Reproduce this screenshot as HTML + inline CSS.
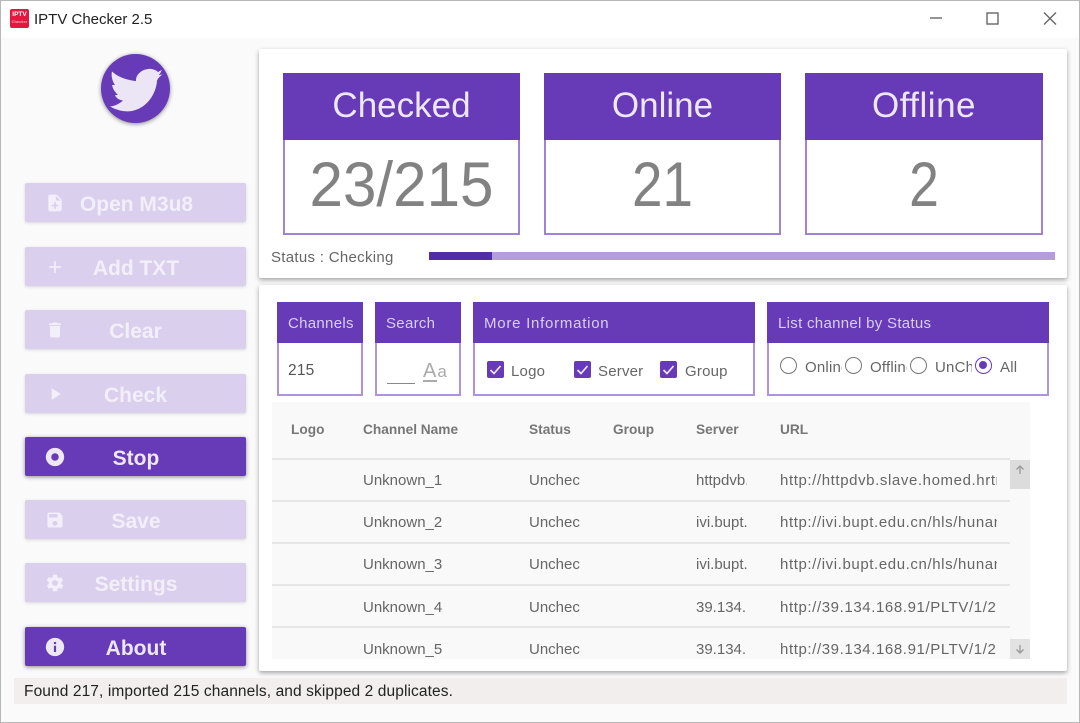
<!DOCTYPE html>
<html><head><meta charset="utf-8">
<style>
html,body{margin:0;padding:0;width:1080px;height:723px;overflow:hidden;background:#fafafa;font-family:"Liberation Sans",sans-serif}
div,span{position:absolute;box-sizing:border-box;white-space:nowrap}
svg{position:absolute;overflow:visible}
.frame{left:0;top:0;width:1080px;height:723px;border:1px solid #b8b8b8;pointer-events:none}
.btn{left:25px;width:221px;height:39px;background:#dacfec;border-radius:2px;box-shadow:0 1px 3px rgba(0,0,0,.14);color:#f3effa;font-weight:bold;font-size:21px;line-height:43px;text-align:center}
.btn.on{background:#673ab7;color:#ede7f6;box-shadow:0 1px 4px rgba(0,0,0,.45)}
.btn svg{left:19.5px;top:10px}
.card{background:#fff;border-radius:2px;box-shadow:0 2px 5px rgba(0,0,0,.35)}
.stat{top:73px;width:237px;height:162px;border:2px solid #a083d8;background:#fff}
.stat .h{left:-2px;top:-2px;width:237px;height:67px;background:#673ab7;color:#ede7f6;font-size:35px;line-height:66px;text-align:center}
.stat .v{left:0;width:233px;top:65px;height:94px;color:#828282;font-size:63px;line-height:90px;text-align:center}
.box{top:302px;height:94px;border:2px solid #ae93e0;border-top:0;background:#fff}
.box .h{left:-2px;top:0;height:41px;background:#673ab7;color:#d9cff0;font-size:15px;letter-spacing:.3px;line-height:43px;padding-left:11px}
.t{font-size:15px;color:#666;letter-spacing:.2px}
.th{top:422px;font-size:13.7px;color:#777;font-weight:bold;line-height:16px}
.cell{font-size:15px;color:#666;line-height:17px;overflow:hidden}
.url{letter-spacing:.6px}
.line{left:272px;width:738px;height:2px;background:#e6e6e6}
.cb{top:361px;width:17px;height:17px;background:#673ab7;border-radius:2px}
.rd{top:357px;width:17px;height:17px;border:1.6px solid #777;border-radius:50%;background:#fff}
</style></head><body>

<div style="left:0;top:0;width:1080px;height:38px;background:#fff"></div>
<div style="left:10px;top:9px;width:19px;height:19px;background:#e5173f;border-radius:2px;color:#fff;font-size:6.5px;font-weight:bold;line-height:9px;text-align:center;overflow:hidden;padding-top:1px">IPTV<br><span style="position:static;font-size:4px;line-height:6px;display:block;color:#f6a9b8">Checker</span></div>
<div style="left:34px;top:11px;font-size:15px;color:#222;line-height:18px">IPTV Checker 2.5</div>
<svg style="left:0;top:0" width="1080" height="38"><g fill="none" stroke="#666" stroke-width="1.4"><path d="M930 18H942"/><rect x="987" y="13" width="11" height="11"/><path d="M1044 12.500L1056 24.500M1056 12.500L1044 24.500"/></g></svg>

<div style="left:101px;top:54px;width:69px;height:69px;border-radius:50%;background:#673ab7;box-shadow:0 1px 4px rgba(0,0,0,.45)"></div>
<svg style="left:0;top:0" width="200" height="130"><path fill="#ebe5f6" d="M161.700 70L158 72C155 69 150 68.500 148 69C143 69.500 137 73 136 79L136 81C126 80 118 77 112 71.500C111 75 112 81 115 85L112 85C113 90 116 93 118 95L115 95C116 98 119 100 123 100.500C119 104 115 106 110 106.500C118 111 126 112 132 111C147 108 156 94 157 81C157.500 79 159 77 162.500 74.500L158.500 75C160 74 161 72 161.700 70Z"/></svg>

<div class="btn" style="top:183px;padding-left:2px">Open M3u8<svg width="20" height="20" viewBox="0 0 24 24"><path fill="#f3effa" d="M14 2H6a2 2 0 0 0-2 2v16a2 2 0 0 0 2 2h12a2 2 0 0 0 2-2V8zm2 14h-3v3h-2v-3H8v-2h3v-3h2v3h3zM13 9V3.500L18.500 9z"/></svg></div>
<div class="btn" style="top:247px;padding-left:1px">Add TXT<svg width="20" height="20" viewBox="0 0 24 24"><path fill="#f3effa" d="M19 13h-6v6h-2v-6H5v-2h6V5h2v6h6z"/></svg></div>
<div class="btn" style="top:310px">Clear<svg width="20" height="20" viewBox="0 0 24 24"><path fill="#f3effa" d="M6 19a2 2 0 0 0 2 2h8a2 2 0 0 0 2-2V7H6zM19 4h-3.500l-1-1h-5l-1 1H5v2h14z"/></svg></div>
<div class="btn" style="top:374px">Check<svg width="20" height="20" viewBox="0 0 24 24"><path fill="#f3effa" d="M8 5v14l11-7z"/></svg></div>
<div class="btn on" style="top:437px;padding-left:1px">Stop<svg width="20" height="20" viewBox="0 0 24 24"><path fill="#ede7f6" fill-rule="evenodd" d="M12 1a11 11 0 1 0 0 22 11 11 0 0 0 0-22zM12 7.500a4.500 4.500 0 1 1 0 9 4.500 4.500 0 0 1 0-9z"/></svg></div>
<div class="btn" style="top:500px;padding-left:1px">Save<svg width="20" height="20" viewBox="0 0 24 24"><path fill="#f3effa" d="M17 3H5a2 2 0 0 0-2 2v14a2 2 0 0 0 2 2h14a2 2 0 0 0 2-2V7zm-5 16a3 3 0 1 1 0-6 3 3 0 0 1 0 6zm3-10H5V5h10z"/></svg></div>
<div class="btn" style="top:563px;padding-left:1px">Settings<svg width="20" height="20" viewBox="0 0 24 24"><path fill="#f3effa" d="M19.400 13c0-.3.100-.6.100-1s0-.7-.1-1l2.100-1.600c.2-.2.200-.4.100-.6l-2-3.500c-.1-.2-.4-.3-.6-.2l-2.500 1c-.5-.4-1.100-.7-1.700-1l-.4-2.600c0-.3-.2-.4-.5-.4h-4c-.3 0-.5.100-.5.400l-.4 2.600c-.6.300-1.200.6-1.700 1l-2.500-1c-.2-.1-.5 0-.6.200l-2 3.500c-.1.200-.1.400.1.600L4.600 11c0 .3-.1.700-.1 1s0 .7.100 1l-2.100 1.600c-.2.200-.2.400-.1.600l2 3.500c.1.200.4.300.6.200l2.500-1c.5.400 1.100.7 1.700 1l.4 2.600c0 .3.200.4.500.4h4c.3 0 .5-.1.500-.4l.4-2.600c.6-.3 1.200-.6 1.700-1l2.500 1c.2.100.5 0 .6-.2l2-3.500c.1-.2.100-.4-.1-.6zM12 15.500a3.500 3.500 0 1 1 0-7 3.500 3.500 0 0 1 0 7z"/></svg></div>
<div class="btn on" style="top:627px;padding-left:1px">About<svg width="20" height="20" viewBox="0 0 24 24"><path fill="#ede7f6" d="M12 1a11 11 0 1 0 0 22 11 11 0 0 0 0-22zm1.300 17h-2.600v-7.500h2.600zm0-9.500h-2.600V6h2.600z"/></svg></div>

<div class="card" style="left:259px;top:49px;width:808px;height:229px"></div>
<div class="stat" style="left:283px"><div class="h">Checked</div><div class="v" style="transform:scaleX(.955)">23/215</div></div>
<div class="stat" style="left:544px"><div class="h">Online</div><div class="v" style="transform:scaleX(.87)">21</div></div>
<div class="stat" style="left:805px;width:238px"><div class="h" style="width:238px;letter-spacing:.5px">Offline</div><div class="v" style="width:234px;transform:scaleX(.85)">2</div></div>
<div class="t" style="left:271px;top:249px;line-height:17px;letter-spacing:.3px">Status : Checking</div>
<div style="left:429px;top:252px;width:626px;height:8px;background:#b39ddb"></div>
<div style="left:429px;top:252px;width:63px;height:8px;background:#512da8"></div>

<div class="card" style="left:259px;top:285px;width:808px;height:386px"></div>
<div class="box" style="left:277px;width:86px"><div class="h" style="width:86px">Channels</div></div>
<div class="t" style="left:288px;top:362px;line-height:17px;color:#555;font-size:15.5px">215</div>
<div class="box" style="left:375px;width:86px"><div class="h" style="width:86px">Search</div></div>
<div style="left:387px;top:383px;width:28px;height:1px;background:#888"></div>
<div style="left:423px;top:360px;font-size:20px;color:#aaa;line-height:22px">A<span style="position:static;font-size:17px;padding-left:1px">a</span></div>
<div style="left:423px;top:380px;width:14px;height:2px;background:#aaa"></div>
<div class="box" style="left:473px;width:282px"><div class="h" style="width:282px;letter-spacing:.75px">More Information</div></div>
<div class="box" style="left:767px;width:282px"><div class="h" style="width:282px">List channel by Status</div></div>

<div class="cb" style="left:487px"></div><div class="cb" style="left:574px"></div><div class="cb" style="left:660px"></div>
<svg style="left:0;top:0" width="1080" height="400"><g fill="none" stroke="#ede7f6" stroke-width="1.7"><path d="M490.500 370L494 373.500L500.500 366"/><path d="M577.500 370L581 373.500L587.500 366"/><path d="M663.500 370L667 373.500L673.500 366"/></g></svg>
<div class="t" style="left:511px;top:363px;line-height:17px">Logo</div>
<div class="t" style="left:598px;top:363px;line-height:17px">Server</div>
<div class="t" style="left:685px;top:363px;line-height:17px">Group</div>

<div class="rd" style="left:780px"></div><div class="rd" style="left:845px"></div><div class="rd" style="left:910px"></div>
<div class="rd" style="left:975px;border-color:#673ab7"><div style="left:2.700px;top:2.700px;width:8.400px;height:8.400px;border-radius:50%;background:#673ab7"></div></div>
<div class="t" style="left:805px;top:359px;width:37px;overflow:hidden;line-height:17px">Online</div>
<div class="t" style="left:870px;top:359px;width:37px;overflow:hidden;line-height:17px">Offline</div>
<div class="t" style="left:935px;top:359px;width:37px;overflow:hidden;line-height:17px">UnCheck</div>
<div class="t" style="left:1000px;top:359px;line-height:17px">All</div>

<div style="left:272px;top:402px;width:758px;height:257px;background:#f9f9f9"></div>
<div class="th" style="left:291px">Logo</div>
<div class="th" style="left:363px">Channel Name</div>
<div class="th" style="left:529px">Status</div>
<div class="th" style="left:613px">Group</div>
<div class="th" style="left:696px">Server</div>
<div class="th" style="left:780px">URL</div>
<div class="line" style="top:458px"></div>
<div class="line" style="top:500px"></div>
<div class="line" style="top:542px"></div>
<div class="line" style="top:584px"></div>
<div class="line" style="top:626px"></div>

<div class="cell" style="left:363px;top:472px">Unknown_1</div><div class="cell" style="left:529px;top:472px;width:51px">Unchecked</div><div class="cell" style="left:696px;top:472px;width:51px">httpdvb.slave</div><div class="cell url" style="left:780px;top:472px;width:217px">http://httpdvb.slave.homed.hrtn.net</div>
<div class="cell" style="left:363px;top:514px">Unknown_2</div><div class="cell" style="left:529px;top:514px;width:51px">Unchecked</div><div class="cell" style="left:696px;top:514px;width:51px">ivi.bupt.edu</div><div class="cell url" style="left:780px;top:514px;width:217px">http://ivi.bupt.edu.cn/hls/hunanhd</div>
<div class="cell" style="left:363px;top:556px">Unknown_3</div><div class="cell" style="left:529px;top:556px;width:51px">Unchecked</div><div class="cell" style="left:696px;top:556px;width:51px">ivi.bupt.edu</div><div class="cell url" style="left:780px;top:556px;width:217px">http://ivi.bupt.edu.cn/hls/hunanhd</div>
<div class="cell" style="left:363px;top:599px">Unknown_4</div><div class="cell" style="left:529px;top:599px;width:51px">Unchecked</div><div class="cell" style="left:696px;top:599px;width:51px">39.134.168</div><div class="cell url" style="left:780px;top:599px;width:217px">http://39.134.168.91/PLTV/1/2</div>
<div class="cell" style="left:363px;top:641px">Unknown_5</div><div class="cell" style="left:529px;top:641px;width:51px">Unchecked</div><div class="cell" style="left:696px;top:641px;width:51px">39.134.168</div><div class="cell url" style="left:780px;top:641px;width:217px">http://39.134.168.91/PLTV/1/2</div>

<div style="left:1010px;top:460px;width:20px;height:29px;background:#dcdcdc"></div>
<div style="left:1010px;top:639px;width:20px;height:20px;background:#e2e2e2"></div>
<svg style="left:0;top:0" width="1080" height="723"><g fill="none" stroke="#999" stroke-width="1.3"><path d="M1020 474V466M1016.500 469.500L1020 466L1023.500 469.500"/><path d="M1020 645V653M1016.500 649.500L1020 653L1023.500 649.500"/></g></svg>

<div style="left:14px;top:678px;width:1053px;height:26px;background:#f1eeed;color:#222;font-size:15.5px;letter-spacing:.1px;line-height:27px;padding-left:10px">Found 217, imported 215 channels, and skipped 2 duplicates.</div>
<div class="frame"></div>
</body></html>
